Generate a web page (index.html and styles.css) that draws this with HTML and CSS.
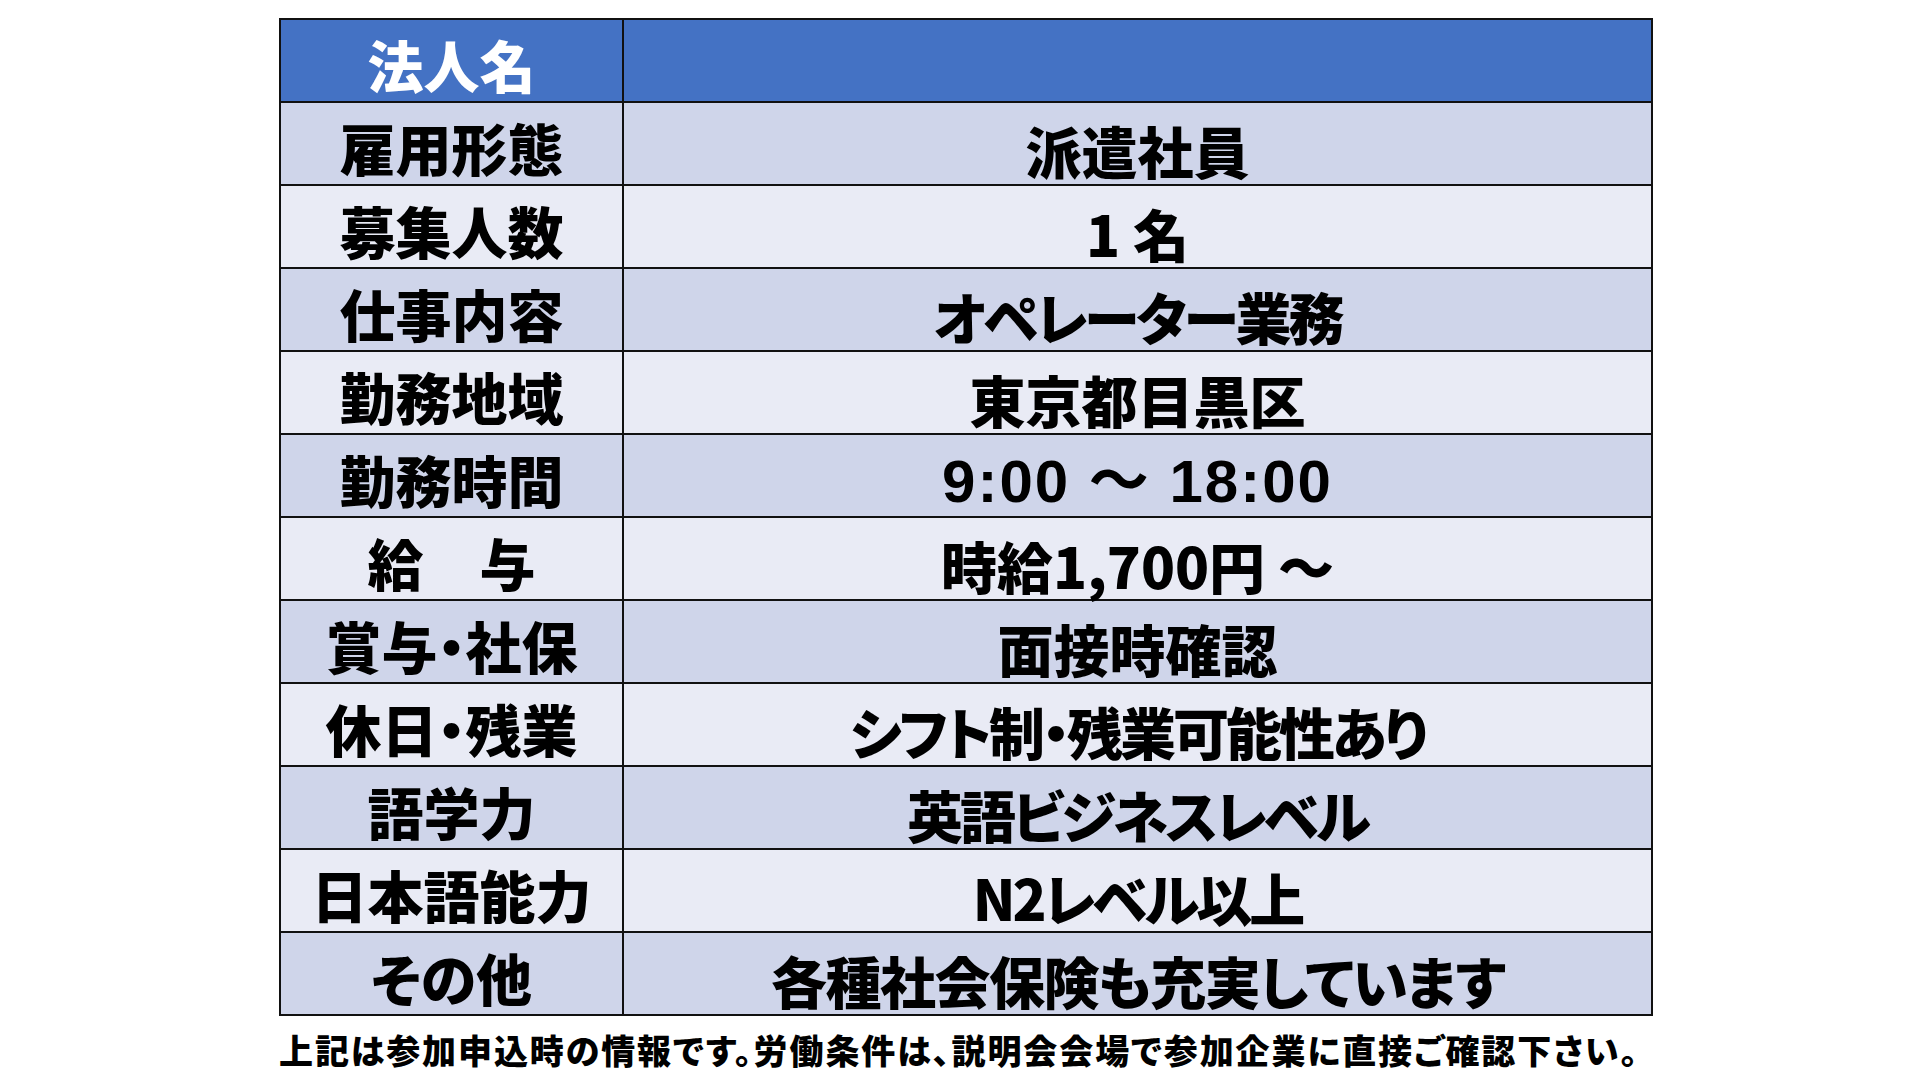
FILE: index.html
```html
<!DOCTYPE html>
<html lang="ja">
<head>
<meta charset="utf-8">
<title>求人情報</title>
<link rel="stylesheet" href="styles.css">
</head>
<body>
<div class="page">
  <table class="job">
    <tr class="head"><th class="label">法人名</th><td class="value"></td></tr>
    <tr class="dark"><th class="label">雇用形態</th><td class="value">派遣社員</td></tr>
    <tr class="light"><th class="label">募集人数</th><td class="value">1 名</td></tr>
    <tr class="dark"><th class="label">仕事内容</th><td class="value kana">オペレーター業務</td></tr>
    <tr class="light"><th class="label">勤務地域</th><td class="value">東京都目黒区</td></tr>
    <tr class="dark"><th class="label">勤務時間</th><td class="value time">9:00 ～ 18:00</td></tr>
    <tr class="light"><th class="label">給　与</th><td class="value">時給1,700円 ～</td></tr>
    <tr class="dark"><th class="label">賞与・社保</th><td class="value">面接時確認</td></tr>
    <tr class="light"><th class="label">休日・残業</th><td class="value kana">シフト制・残業可能性あり</td></tr>
    <tr class="dark"><th class="label">語学力</th><td class="value kana">英語ビジネスレベル</td></tr>
    <tr class="light"><th class="label">日本語能力</th><td class="value kana">N2レベル以上</td></tr>
    <tr class="dark"><th class="label">その他</th><td class="value kana-light">各種社会保険も充実しています</td></tr>
  </table>
  <p class="note">上記は参加申込時の情報です。労働条件は、説明会会場で参加企業に直接ご確認下さい。</p>
</div>
</body>
</html>
```
FILE: styles.css
```css
html, body {
  margin: 0;
  padding: 0;
  background: #ffffff;
}
body {
  font-family: "Noto Sans CJK JP", "Noto Sans", sans-serif;
  color: #000;
}
.page {
  width: 1920px;
  height: 1080px;
  padding: 18px 0 0 279px;
  box-sizing: border-box;
  overflow: hidden;
}
.job {
  border-collapse: collapse;
  width: 1374px;
  table-layout: fixed;
}
.job th, .job td {
  border: 2px solid #111;
  padding: 0;
  text-align: center;
  vertical-align: middle;
  font-size: 56px;
  font-weight: 900;
  line-height: 1;
  font-feature-settings: "palt" 1;
}
.job .label {
  width: 341px;
  height: 75px;
  padding-top: 6px;
}
.job .value {
  height: 69px;
  padding-top: 12px;
}
.head th, .head td {
  background: #4472c4;
  color: #fff;
}
.dark th, .dark td {
  background: #cfd5ea;
}
.light th, .light td {
  background: #e9ebf5;
}
.value.kana {
  letter-spacing: -3px;
}
.value.kana-light {
  letter-spacing: -1.5px;
}
.value.time {
  font-family: "Liberation Sans", "Noto Sans CJK JP", sans-serif;
  font-weight: 700;
  font-size: 60px;
  letter-spacing: 2px;
}
.note {
  margin: 14px 0 0 0;
  font-size: 34px;
  font-weight: 900;
  line-height: 40px;
  letter-spacing: 1.9px;
  font-feature-settings: "palt" 1;
  white-space: nowrap;
}
```
